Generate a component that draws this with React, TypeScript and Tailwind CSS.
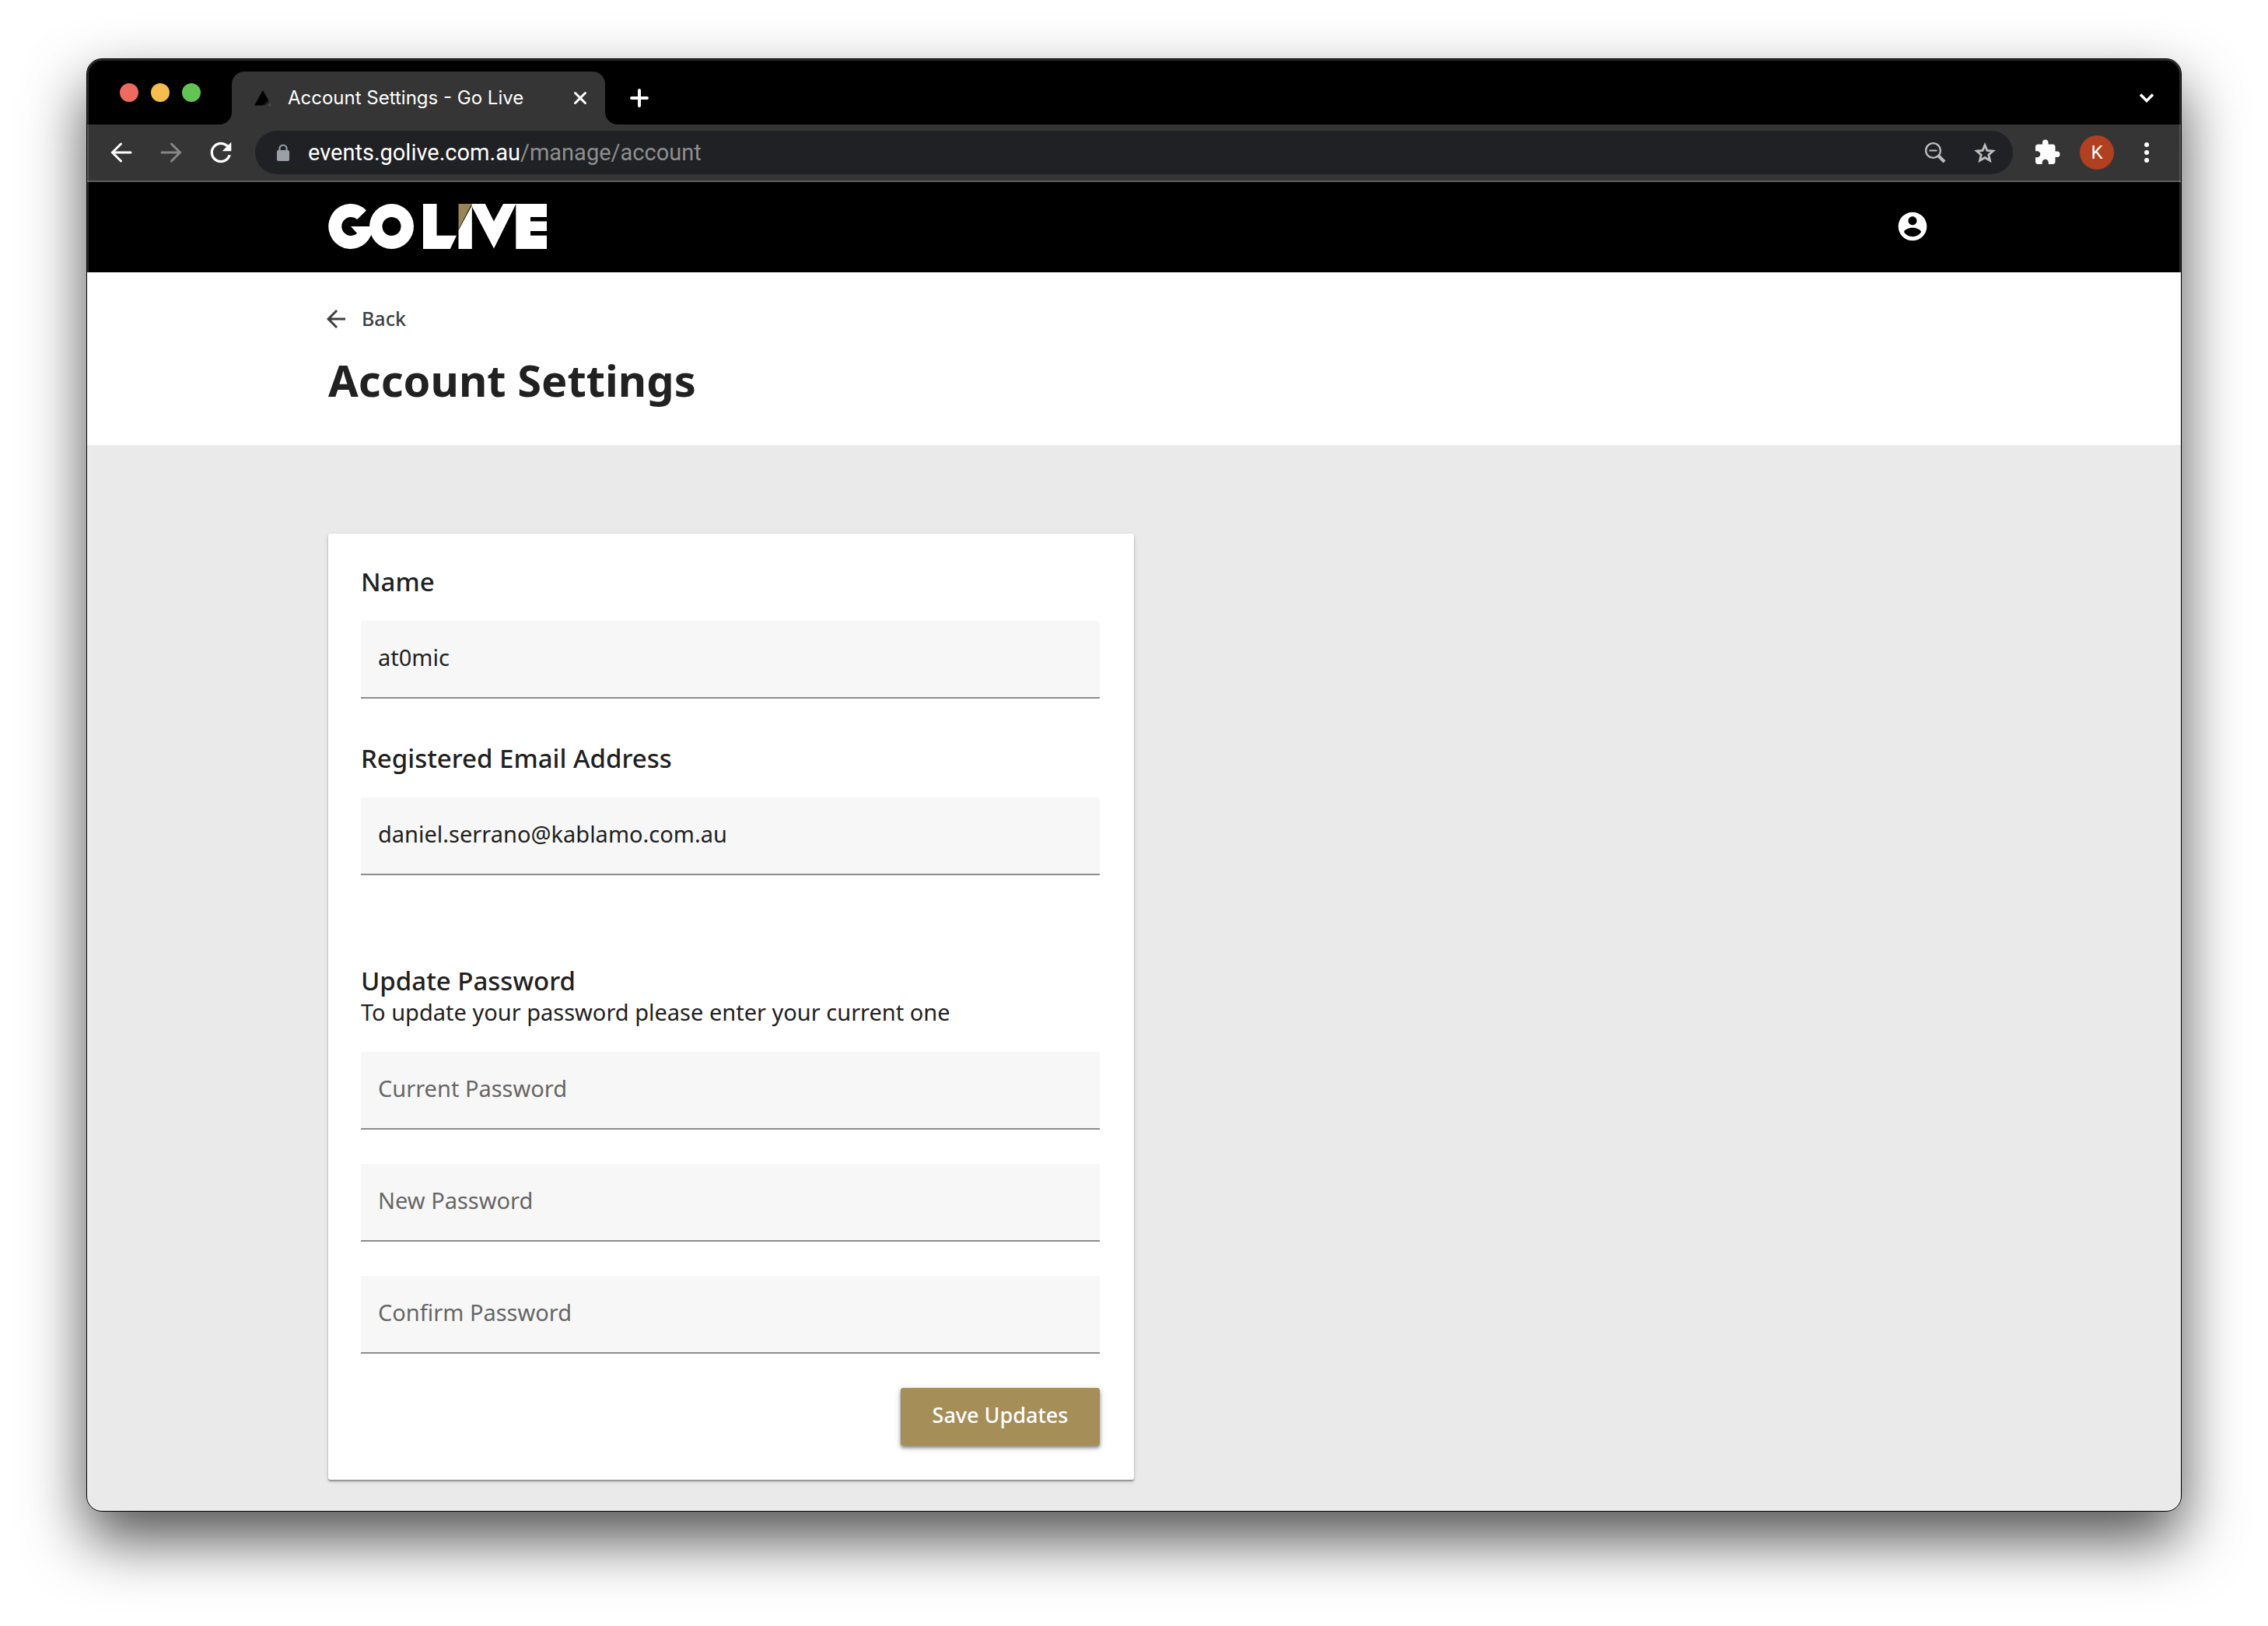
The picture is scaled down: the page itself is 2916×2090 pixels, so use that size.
import type { ReactNode } from "react";
import { MdArrowBack, MdExtension, MdRefresh } from "react-icons/md";

function IconButton({ label, children, className = "" }: { label: string; children: ReactNode; className?: string }) {
  return (
    <button type="button" aria-label={label} className={`flex shrink-0 items-center justify-center ${className}`}>
      {children}
    </button>
  );
}

function TabStrip() {
  return (
    <div className="flex h-[84px] bg-[#353535]">
      <div className="flex w-[186px] shrink-0 gap-4 rounded-br-[16px] bg-black pt-[31px] pl-[42px]">
        <button type="button" aria-label="Close window" className="size-6 rounded-full bg-[#ec6a5e]" />
        <button type="button" aria-label="Minimise window" className="size-6 rounded-full bg-[#f5bd4f]" />
        <button type="button" aria-label="Zoom window" className="size-6 rounded-full bg-[#61c454]" />
      </div>
      <div className="w-[480px] shrink-0 bg-black pt-4">
        <div className="flex h-[68px] items-center rounded-t-[16px] bg-[#353535] pr-5 pl-7">
          <svg viewBox="0 0 24 24" className="size-6 shrink-0">
            <defs>
              <linearGradient id="fav" x1="0" y1="0" x2="1" y2="1">
                <stop offset="0.7" stopColor="#000" />
                <stop offset="0.95" stopColor="#555" />
              </linearGradient>
            </defs>
            <path d="M12 2 23 21.500H1Z" fill="url(#fav)" />
          </svg>
          <span className="ml-5 flex-1 font-[Inter,sans-serif] text-[24px] leading-8 whitespace-nowrap text-white">
            Account Settings - Go Live
          </span>
          <IconButton label="Close tab" className="size-6">
            <svg viewBox="0 0 24 24" className="size-6" stroke="#fff" strokeWidth="3" strokeLinecap="round">
              <path d="M5.500 5.500 18.500 18.500M18.500 5.500 5.500 18.500" />
            </svg>
          </IconButton>
        </div>
      </div>
      <div className="flex flex-1 items-center justify-between rounded-bl-[16px] bg-black pt-4 pr-[30px] pl-7">
        <IconButton label="New tab" className="size-8">
          <svg viewBox="0 0 32 32" className="size-8" stroke="#fff" strokeWidth="4" strokeLinecap="round">
            <path d="M16 6V26M6 16H26" />
          </svg>
        </IconButton>
        <IconButton label="Search tabs" className="size-7">
          <svg viewBox="0 0 28 28" className="size-7" fill="none" stroke="#fff" strokeWidth="3.500">
            <path d="M6 9.500 14 17.500 22 9.500" />
          </svg>
        </IconButton>
      </div>
    </div>
  );
}

function Toolbar() {
  return (
    <div className="flex h-[74px] items-center border-b-2 border-[#5e5e5e] bg-[#353535] pr-[30px] pl-7">
      <div className="flex items-center gap-8">
        <IconButton label="Back" className="size-8">
          <svg viewBox="0 0 32 32" className="size-8" fill="none" stroke="#fff" strokeWidth="3" strokeLinecap="round">
            <path d="M28 16H5M15.500 5 4.500 16 15.500 27" />
          </svg>
        </IconButton>
        <IconButton label="Forward" className="size-8">
          <svg viewBox="0 0 32 32" className="size-8" fill="none" stroke="#868686" strokeWidth="3" strokeLinecap="round">
            <path d="M4 16H27M16.500 5 27.500 16 16.500 27" />
          </svg>
        </IconButton>
        <IconButton label="Reload" className="size-8">
          <MdRefresh className="size-10 shrink-0 text-white" />
        </IconButton>
      </div>
      <div className="ml-7 flex h-14 flex-1 items-center rounded-full bg-[#202124] pr-[18px] pl-6">
        <svg viewBox="0 0 24 24" className="size-6 shrink-0">
          <path d="M7.500 11V7a4.500 4.500 0 0 1 9 0v4" fill="none" stroke="#9aa0a6" strokeWidth="2.200" />
          <rect x="4" y="9" width="16" height="14" rx="2" fill="#9aa0a6" />
        </svg>
        <div
          role="textbox"
          aria-label="Address"
          className="ml-5 flex-1 font-[Roboto,sans-serif] text-[29px] leading-9 whitespace-nowrap text-[#8e8e8f]"
        >
          <span className="text-white">events.golive.com.au</span>/manage/account
        </div>
        <div className="flex items-center gap-7">
          <IconButton label="Zoom level">
            <svg viewBox="0 0 36 36" className="size-9" fill="none" stroke="#bdbdbe">
              <circle cx="15.500" cy="15.500" r="9.400" strokeWidth="2.400" />
              <path d="M10.500 15.500H20.500" strokeWidth="2" />
              <path d="M22 22 30 30" strokeWidth="4" />
            </svg>
          </IconButton>
          <IconButton label="Bookmark this page">
            <svg viewBox="0 0 36 36" className="size-9" fill="none" stroke="#bdbdbe" strokeWidth="2.800" strokeMiterlimit="10">
              <path d="M18 8.500 20.900 15.500 28.500 16.100 22.800 21 24.500 28.400 18 24.500 11.500 28.400 13.200 21 7.500 16.100 15.100 15.500Z" />
            </svg>
          </IconButton>
        </div>
      </div>
      <IconButton label="Extensions" className="ml-[26px]">
        <MdExtension className="size-9 text-white" />
      </IconButton>
      <IconButton label="Profile K" className="ml-6 size-11 rounded-full bg-[#b04020]">
        <span className="font-[Roboto,sans-serif] text-[24px] leading-8 text-white">K</span>
      </IconButton>
      <IconButton label="Menu" className="ml-7 size-7">
        <svg viewBox="0 0 28 28" className="size-7 shrink-0" fill="#fff">
          <circle cx="14" cy="4" r="3" />
          <circle cx="14" cy="14" r="3" />
          <circle cx="14" cy="24" r="3" />
        </svg>
      </IconButton>
    </div>
  );
}

function Logo() {
  return (
    <svg viewBox="0 0 281 58" className="h-[58px] w-[281px]" role="img" aria-label="Go Live" fill="#fff">
      <path
        fillRule="evenodd"
        d="M81.500 0a28.500 29 0 1 0 0 58a28.500 29 0 1 0 0-58ZM81.500 17a12 12 0 1 1 0 24a12 12 0 1 1 0-24Z"
      />
      <path d="M49 8.500A28.500 29 0 1 0 55 40.500L58 29H29L37.200 38A12 12 0 1 1 37.200 20Z" />
      <path d="M122 0H139.500V40.700H165L156.800 58H122Z" />
      <path d="M167.500 0H184.500L167.500 33Z" fill="#998658" />
      <path d="M184.800 2V58H167.500V34Z" />
      <path d="M184.500 0H201.800L212.900 22.500 225 0H241.500L213 57.500 184.500 3Z" />
      <path d="M241.300 0H281V17H260V22.500H281V35H260V40.700H281V58H241.300Z" />
    </svg>
  );
}

function Field({
  id,
  label,
  type = "text",
  value,
  placeholder,
}: {
  id: string;
  label?: string;
  type?: string;
  value?: string;
  placeholder?: string;
}) {
  return (
    <div className="flex flex-col">
      {label && (
        <label htmlFor={id} className="mb-7 text-[33px] leading-[44px] font-medium">
          {label}
        </label>
      )}
      <input
        id={id}
        type={type}
        defaultValue={value}
        placeholder={placeholder}
        aria-label={label ? undefined : placeholder}
        className="h-[100px] w-full rounded-t-[3px] border-b-2 border-[#8c8c8c] bg-[#f7f7f7] px-[22px] pb-[6px] text-[29px] text-[#212121] outline-none placeholder:text-[#666666] placeholder:opacity-100"
      />
    </div>
  );
}

function SettingsCard() {
  return (
    <form
      onSubmit={(e) => e.preventDefault()}
      className="flex w-1/2 flex-col rounded-[3px] bg-white pt-10 pr-11 pb-11 pl-[42px] shadow-[0_2px_2px_rgba(0,0,0,0.35),0_2px_6px_rgba(0,0,0,0.12)]"
    >
      <div className="flex flex-col gap-[55px]">
        <Field id="name" label="Name" value="at0mic" />
        <Field id="email" label="Registered Email Address" type="email" value="daniel.serrano@kablamo.com.au" />
      </div>
      <h2 className="mt-[114px] text-[33px] leading-[44px] font-medium">Update Password</h2>
      <p className="text-[29px] leading-9">To update your password please enter your current one</p>
      <div className="mt-[33px] flex flex-col gap-11">
        <Field id="current" type="password" placeholder="Current Password" />
        <Field id="new" type="password" placeholder="New Password" />
        <Field id="confirm" type="password" placeholder="Confirm Password" />
      </div>
      <button
        type="submit"
        className="mt-11 h-[74px] w-64 self-end rounded-[3px] bg-[#a68e59] pb-1 text-[27px] font-medium text-white shadow-[0_3px_4px_rgba(0,0,0,0.4),0_2px_10px_rgba(0,0,0,0.16)]"
      >
        Save Updates
      </button>
    </form>
  );
}

export default function App() {
  return (
    <div className="min-h-screen bg-white px-[111px] pt-[75px] pb-[147px]">
      <div className="relative overflow-hidden rounded-[20px] border border-black bg-[#eaeaea] font-['Noto_Sans',sans-serif] text-[#212121] shadow-[0_36px_78px_rgba(0,0,0,0.68)]">
        <TabStrip />
        <Toolbar />
        <header className="bg-black">
          <div className="mx-auto flex h-[116px] max-w-[2072px] items-center justify-between pr-[13px] pb-[2px]">
            <a href="#home" aria-label="Go Live home">
              <Logo />
            </a>
            <IconButton label="Account">
              <svg viewBox="0 0 24 24" className="size-11" fill="#fff">
                <path d="M12 2C6.480 2 2 6.480 2 12s4.480 10 10 10 10-4.480 10-10S17.520 2 12 2zm0 3c1.660 0 3 1.340 3 3s-1.340 3-3 3-3-1.340-3-3 1.340-3 3-3zm0 14.200c-2.500 0-4.710-1.280-6-3.220.030-1.990 4-3.080 6-3.080 1.990 0 5.970 1.090 6 3.080-1.290 1.940-3.500 3.220-6 3.220z" />
              </svg>
            </IconButton>
          </div>
        </header>
        <div className="bg-white">
          <div className="mx-auto max-w-[2072px] pt-10 pb-12">
            <a href="#back" className="-ml-2 flex h-10 w-fit items-center gap-[15px] text-[25px] font-medium text-[#3c4043]">
              <MdArrowBack className="size-9" />
              Back
            </a>
            <h1 className="mt-[22px] text-[56px] leading-[72px] font-bold">Account Settings</h1>
          </div>
        </div>
        <main className="mx-auto max-w-[2072px] pt-[114px] pb-10">
          <SettingsCard />
        </main>
        <div className="pointer-events-none absolute inset-0 rounded-[19px] shadow-[inset_0_0_0_2px_rgba(255,255,255,0.16)]" />
      </div>
    </div>
  );
}
